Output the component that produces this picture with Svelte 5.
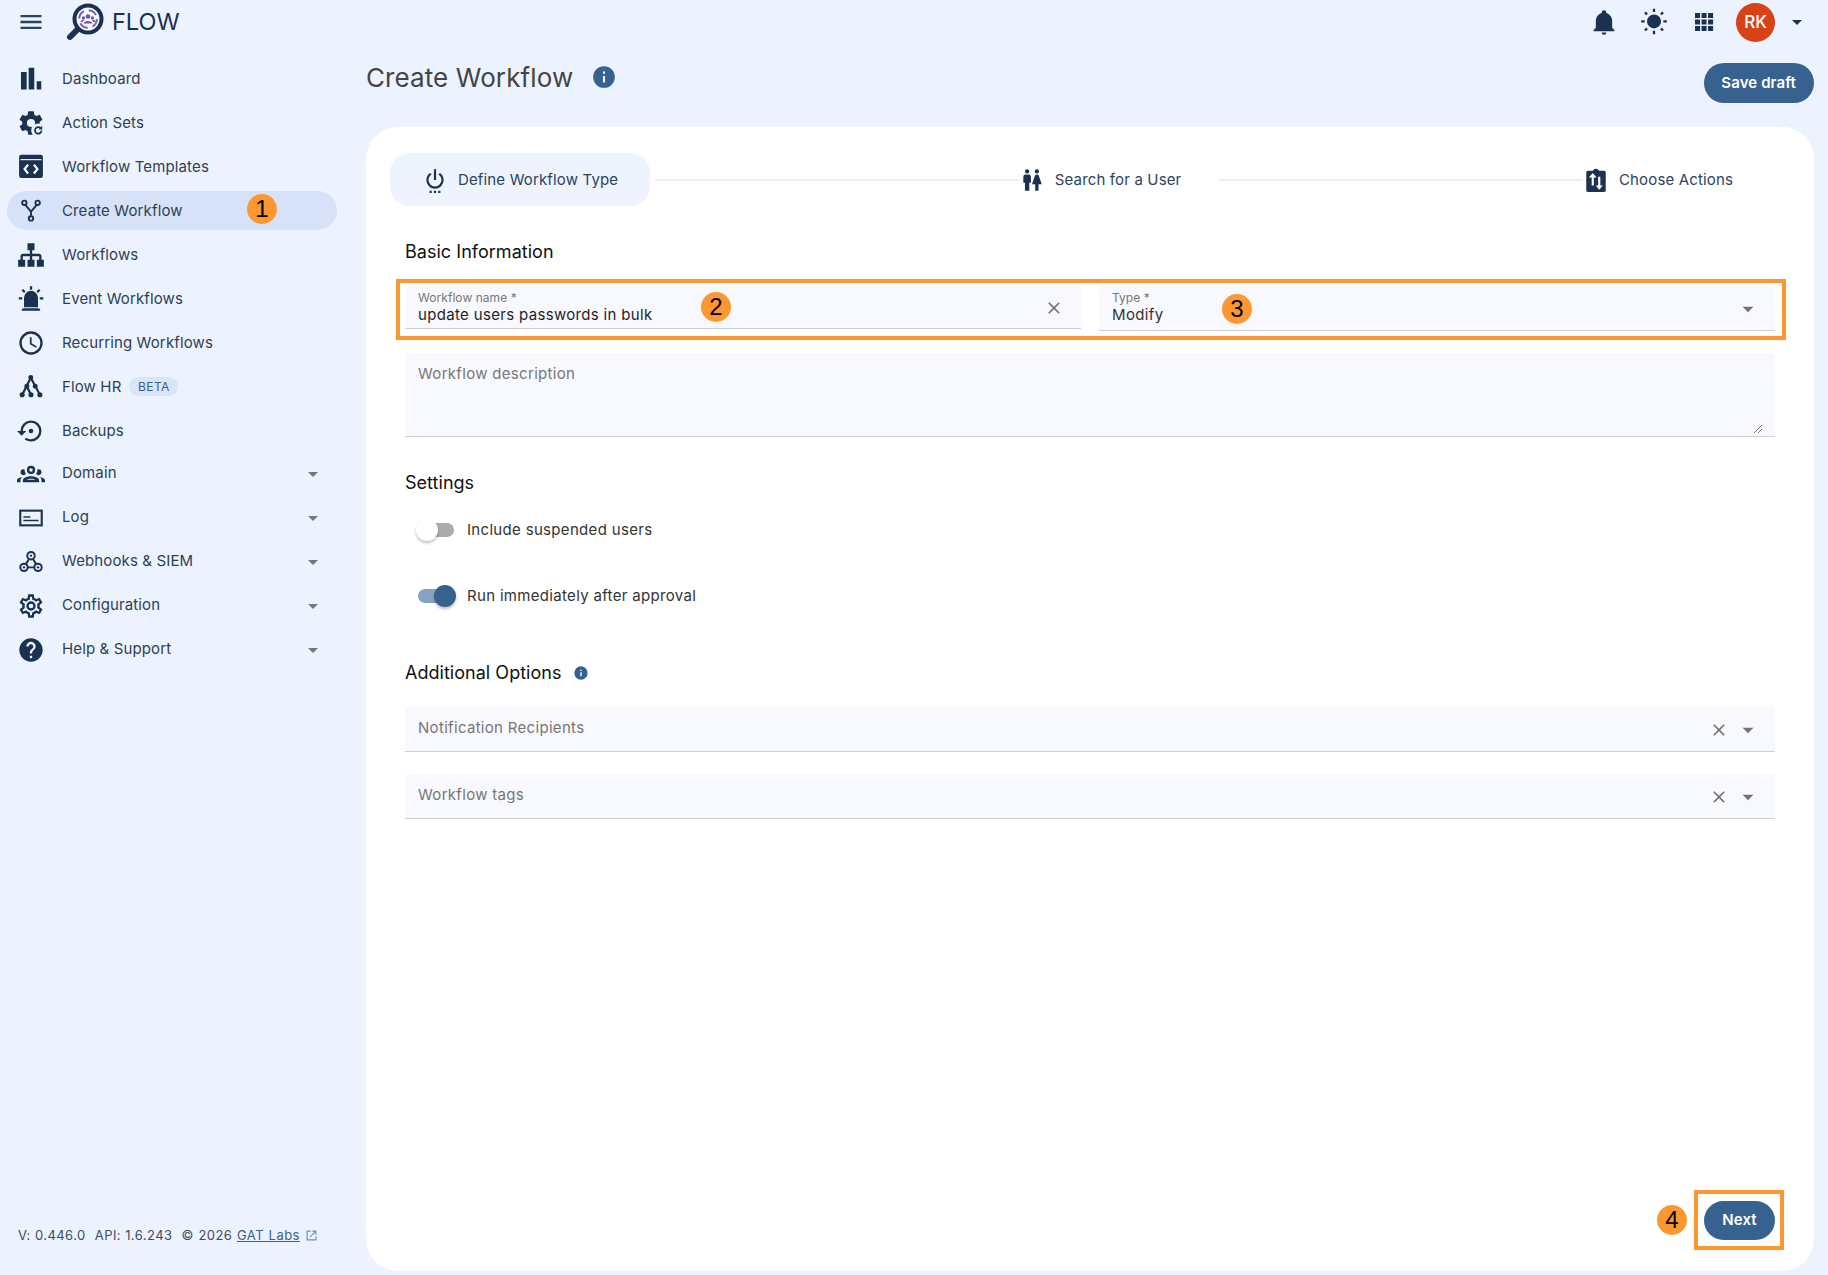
<script>
	const P = (d) => `<path fill="currentColor" d="${d}"/>`;
	const cog =
		"M12,15.5A3.5,3.5 0 0,1 8.5,12A3.5,3.5 0 0,1 12,8.5A3.5,3.5 0 0,1 15.5,12A3.5,3.5 0 0,1 12,15.5M19.43,12.97C19.47,12.65 19.5,12.33 19.5,12C19.5,11.67 19.47,11.34 19.43,11L21.54,9.37C21.73,9.22 21.78,8.95 21.66,8.73L19.66,5.27C19.54,5.05 19.27,4.96 19.05,5.05L16.56,6.05C16.04,5.66 15.5,5.32 14.87,5.07L14.5,2.42C14.46,2.18 14.25,2 14,2H10C9.75,2 9.54,2.18 9.5,2.42L9.13,5.07C8.5,5.32 7.96,5.66 7.44,6.05L4.95,5.05C4.73,4.96 4.46,5.05 4.34,5.27L2.34,8.73C2.21,8.95 2.27,9.22 2.46,9.37L4.57,11C4.53,11.34 4.5,11.67 4.5,12C4.5,12.33 4.53,12.65 4.57,12.97L2.46,14.63C2.27,14.78 2.21,15.05 2.34,15.27L4.34,18.73C4.46,18.95 4.73,19.03 4.95,18.95L7.44,17.94C7.96,18.34 8.5,18.68 9.13,18.93L9.5,21.58C9.54,21.82 9.75,22 10,22H14C14.25,22 14.46,21.82 14.5,21.58L14.87,18.93C15.5,18.67 16.04,18.34 16.56,17.94L19.05,18.95C19.27,19.03 19.54,18.95 19.66,18.73L21.66,15.27C21.78,15.05 21.73,14.78 21.54,14.63L19.43,12.97Z";

	const icons = {
		menu: P("M3,6H21V8H3V6M3,11H21V13H3V11M3,16H21V18H3V16Z"),
		bars: P("M3.4 6h4.9v15H3.4zM10 2.4h4.8V21H10zM16.9 14h3.9v7h-3.9z"),
		actionsets:
			P(cog) +
			`<circle cx="18.2" cy="18.4" r="6" fill="#ecf3fe"/><path d="M21 18.4a2.8 2.8 0 1 1-.9-2.1" fill="none" stroke="currentColor" stroke-width="1.5"/><path fill="currentColor" d="M21.6 14.4v3.2h-3.2z"/>`,
		templates: `<rect x="1.8" y="1.5" width="20.4" height="20" rx="2" fill="currentColor"/><rect x="3" y="5.2" width="18" height="1" fill="#ecf3fe"/><path d="M9.5 10l-3 3.8 3 3.8M14.5 10l3 3.8-3 3.8" fill="none" stroke="#fff" stroke-width="1.9"/>`,
		fork: `<g fill="none" stroke="currentColor" stroke-width="1.6"><circle cx="6.3" cy="5" r="1.9"/><circle cx="17.7" cy="5" r="1.9"/><circle cx="12" cy="18.4" r="1.9"/><path d="M7.1 6.8L12 12.6 16.9 6.8M12 12.6v3.9"/></g>`,
		sitemap: P("M9,2V8H11V11H5C3.89,11 3,11.89 3,13V16H1V22H7V16H5V13H11V16H9V22H15V16H13V13H19V16H17V22H23V16H21V13C21,11.89 20.1,11 19,11H13V8H15V2H9Z"),
		alarm: P("M6,6.9L3.87,4.78L5.28,3.37L7.4,5.5L6,6.9M13,1V4H11V1H13M20.13,4.78L18,6.9L16.6,5.5L18.72,3.37L20.13,4.78M4.5,10.5V12.5H1.5V10.5H4.5M19.5,10.5H22.5V12.5H19.5V10.5M6,20H18A2,2 0 0,1 20,22H4A2,2 0 0,1 6,20M12,5A6,6 0 0,1 18,11V19H6V11A6,6 0 0,1 12,5Z"),
		clock: P("M12,20A8,8 0 0,0 20,12A8,8 0 0,0 12,4A8,8 0 0,0 4,12A8,8 0 0,0 12,20M12,2A10,10 0 0,1 22,12A10,10 0 0,1 12,22C6.47,22 2,17.5 2,12A10,10 0 0,1 12,2M12.5,7V12.25L17,14.92L16.25,16.15L11,13V7H12.5Z"),
		tree: `<g fill="currentColor"><circle cx="11.800" cy="3.800" r="2.100"/><circle cx="8.400" cy="11.400" r="2.100"/><circle cx="15.600" cy="11.400" r="2.100"/><circle cx="4.400" cy="18.600" r="2.200"/><circle cx="12" cy="18.600" r="2.200"/><circle cx="19.600" cy="18.600" r="2.200"/></g><path d="M11.800 4L4.600 18.500M11.800 4l7.700 14.500M8.400 11.400l3.600 7.200" fill="none" stroke="currentColor" stroke-width="1.900"/>`,
		backup: P("M12,3A9,9 0 0,0 3,12H0L4,16L8,12H5A7,7 0 0,1 12,5A7,7 0 0,1 19,12A7,7 0 0,1 12,19C10.5,19 9.09,18.5 7.94,17.7L6.5,19.14C8.04,20.3 9.94,21 12,21A9,9 0 0,0 21,12A9,9 0 0,0 12,3M14,12A2,2 0 0,0 12,10A2,2 0 0,0 10,12A2,2 0 0,0 12,14A2,2 0 0,0 14,12Z"),
		group: P("M12,5A3.5,3.5 0 0,0 8.5,8.5A3.5,3.5 0 0,0 12,12A3.5,3.5 0 0,0 15.5,8.5A3.5,3.5 0 0,0 12,5M12,7A1.5,1.5 0 0,1 13.5,8.5A1.5,1.5 0 0,1 12,10A1.5,1.5 0 0,1 10.5,8.5A1.5,1.5 0 0,1 12,7M5.5,8A2.5,2.5 0 0,0 3,10.5C3,11.44 3.53,12.25 4.29,12.68C4.65,12.88 5.06,13 5.5,13C5.94,13 6.35,12.88 6.71,12.68C7.08,12.47 7.39,12.17 7.62,11.81C6.89,10.86 6.5,9.7 6.5,8.5C6.5,8.41 6.5,8.31 6.5,8.22C6.2,8.08 5.86,8 5.5,8M18.5,8C18.14,8 17.8,8.08 17.5,8.22C17.5,8.31 17.5,8.41 17.5,8.5C17.5,9.7 17.11,10.86 16.38,11.81C16.5,12 16.63,12.15 16.78,12.3C16.94,12.45 17.1,12.58 17.29,12.68C17.65,12.88 18.06,13 18.5,13C18.94,13 19.35,12.88 19.71,12.68C20.47,12.25 21,11.44 21,10.5A2.5,2.5 0 0,0 18.5,8M12,14C9.66,14 5,15.17 5,17.5V19H19V17.5C19,15.17 14.34,14 12,14M4.71,14.55C2.78,14.78 0,15.76 0,17.5V19H3V17.07C3,16.06 3.69,15.22 4.71,14.55M19.29,14.55C20.31,15.22 21,16.06 21,17.07V19H24V17.5C24,15.76 21.22,14.78 19.29,14.55M12,16C13.53,16 15.24,16.5 16.23,17H7.77C8.76,16.5 10.47,16 12,16Z"),
		log: `<rect x="2.800" y="5.700" width="18.400" height="12.600" fill="none" stroke="currentColor" stroke-width="1.800"/><path d="M5.500 10.400h6v1.300h-6zM5.500 13.400h13v1.300h-13z" fill="currentColor"/>`,
		webhook: `<g fill="none" stroke="currentColor" stroke-width="1.700"><circle cx="12" cy="6.600" r="3.200"/><circle cx="6" cy="16.600" r="3.200"/><circle cx="18" cy="16.600" r="3.200"/><path d="M10.300 9.500L7.600 13.800M13.700 9.500l2.700 4.300M9.200 16.600h5.600"/></g><g fill="currentColor"><circle cx="12" cy="6.600" r="1"/><circle cx="6" cy="16.600" r="1"/><circle cx="18" cy="16.600" r="1"/></g>`,
		gear: P("M12,8A4,4 0 0,1 16,12A4,4 0 0,1 12,16A4,4 0 0,1 8,12A4,4 0 0,1 12,8M12,10A2,2 0 0,0 10,12A2,2 0 0,0 12,14A2,2 0 0,0 14,12A2,2 0 0,0 12,10M10,22C9.75,22 9.54,21.82 9.5,21.58L9.13,18.93C8.5,18.68 7.96,18.34 7.44,17.94L4.95,18.95C4.73,19.03 4.46,18.95 4.34,18.73L2.34,15.27C2.21,15.05 2.27,14.78 2.46,14.63L4.57,12.97L4.5,12L4.57,11L2.46,9.37C2.27,9.22 2.21,8.95 2.34,8.73L4.34,5.27C4.46,5.05 4.73,4.96 4.95,5.05L7.44,6.05C7.96,5.66 8.5,5.32 9.13,5.07L9.5,2.42C9.54,2.18 9.75,2 10,2H14C14.25,2 14.46,2.18 14.5,2.42L14.87,5.07C15.5,5.32 16.04,5.66 16.56,6.05L19.05,5.05C19.27,4.96 19.54,5.05 19.66,5.27L21.66,8.73C21.79,8.95 21.73,9.22 21.54,9.37L19.43,11L19.5,12L19.43,13L21.54,14.63C21.73,14.78 21.79,15.05 21.66,15.27L19.66,18.73C19.54,18.95 19.27,19.04 19.05,18.95L16.56,17.95C16.04,18.34 15.5,18.68 14.87,18.93L14.5,21.58C14.46,21.82 14.25,22 14,22H10M11.25,4L10.88,6.61C9.68,6.86 8.62,7.5 7.85,8.39L5.44,7.35L4.69,8.65L6.8,10.2C6.4,11.37 6.4,12.64 6.8,13.8L4.68,15.36L5.43,16.66L7.86,15.62C8.63,16.5 9.68,17.14 10.87,17.38L11.24,20H12.76L13.13,17.39C14.32,17.14 15.37,16.5 16.14,15.62L18.57,16.66L19.32,15.36L17.2,13.81C17.6,12.64 17.6,11.37 17.2,10.2L19.31,8.65L18.56,7.35L16.15,8.39C15.38,7.5 14.32,6.86 13.12,6.62L12.75,4H11.25Z"),
		help: P("M15.07,11.25L14.17,12.17C13.45,12.89 13,13.5 13,15H11V14.5C11,13.39 11.45,12.39 12.17,11.67L13.41,10.41C13.78,10.05 14,9.55 14,9C14,7.89 13.1,7 12,7A2,2 0 0,0 10,9H8A4,4 0 0,1 12,5A4,4 0 0,1 16,9C16,9.88 15.64,10.67 15.07,11.25M13,19H11V17H13M12,2A10,10 0 0,0 2,12A10,10 0 0,0 12,22A10,10 0 0,0 22,12C22,6.47 17.5,2 12,2Z"),
		bell: P("M21,19V20H3V19L5,17V11C5,7.9 7.03,5.17 10,4.29C10,4.19 10,4.1 10,4A2,2 0 0,1 12,2A2,2 0 0,1 14,4C14,4.1 14,4.19 14,4.29C16.97,5.17 19,7.9 19,11V17L21,19M14,21A2,2 0 0,1 12,23A2,2 0 0,1 10,21"),
		sun: P("M3.55,18.54L4.96,19.95L6.76,18.16L5.34,16.74M11,22.45C11.32,22.45 13,22.45 13,22.45V19.5H11M12,5.5A6,6 0 0,0 6,11.5A6,6 0 0,0 12,17.5A6,6 0 0,0 18,11.5C18,8.18 15.31,5.5 12,5.5M20,12.5H23V10.5H20M17.24,18.16L19.04,19.95L20.45,18.54L18.66,16.74M20.45,4.46L19.04,3.05L17.24,4.84L18.66,6.26M13,0.55H11V3.5H13M4,10.5H1V12.5H4M6.76,4.84L4.96,3.05L3.55,4.46L5.34,6.26L6.76,4.84Z"),
		apps: P("M4.3 4.3h4.3v4.3H4.3zM9.9 4.3h4.3v4.3H9.9zM15.5 4.3h4.3v4.3h-4.3zM4.3 9.9h4.3v4.3H4.3zM9.9 9.9h4.3v4.3H9.9zM15.5 9.9h4.3v4.3h-4.3zM4.3 15.5h4.3v4.3H4.3zM9.9 15.5h4.3v4.3H9.9zM15.5 15.5h4.3v4.3h-4.3z"),
		power: P("M15,24H17V22H15M16.56,5.44L15.11,6.89C16.84,7.94 18,9.83 18,12A6,6 0 0,1 12,18A6,6 0 0,1 6,12C6,9.83 7.16,7.94 8.88,6.88L7.44,5.44C5.36,6.88 4,9.28 4,12A8,8 0 0,0 12,20A8,8 0 0,0 20,12C20,9.28 18.64,6.88 16.56,5.44M13,2H11V12H13M11,24H13V22H11M7,24H9V22H7V24Z"),
		people: P("M7.5,2A2,2 0 0,1 9.5,4A2,2 0 0,1 7.5,6A2,2 0 0,1 5.5,4A2,2 0 0,1 7.5,2M6,7H9A2,2 0 0,1 11,9V14.5H9.5V22H5.5V14.5H4V9A2,2 0 0,1 6,7M16.5,2A2,2 0 0,1 18.5,4A2,2 0 0,1 16.5,6A2,2 0 0,1 14.5,4A2,2 0 0,1 16.5,2M15,22V16H12L14.59,8.41C14.84,7.59 15.6,7 16.5,7C17.4,7 18.16,7.59 18.41,8.41L21,16H18V22H15Z"),
		clipswap: `<path fill="currentColor" d="M4.5 3.5h4.7a3 3 0 0 1 5.6 0h4.7A1.5 1.5 0 0 1 21 5v16.5a1.5 1.5 0 0 1-1.5 1.5h-15A1.5 1.5 0 0 1 3 21.500V5a1.500 1.500 0 0 1 1.500-1.500z"/><path fill="#fff" d="M9 5.600L5.400 9.600H8V17h2V9.600h2.600zM14 9v8h-2.200l3.200 4 3.200-4H16V9z"/>`,
		info: P("M13,9H11V7H13M13,17H11V11H13M12,2A10,10 0 0,0 2,12A10,10 0 0,0 12,22A10,10 0 0,0 22,12A10,10 0 0,0 12,2Z"),
		close: P("M19,6.41L17.59,5L12,10.59L6.41,5L5,6.41L10.59,12L5,17.59L6.41,19L12,13.41L17.59,19L19,17.59L13.41,12L19,6.41Z"),
		down: P("M7,10L12,15L17,10H7Z"),
		open: `<path d="M5 5h6v1.600H6.600v10.800h10.800V13H19v6H5z" fill="currentColor"/><path d="M13 5h6v6h-1.600V7.700l-6.800 6.800-1.100-1.100 6.800-6.800H13z" fill="currentColor"/>`
	};

	const topItems = [
		{ icon: "bars", label: "Dashboard" },
		{ icon: "actionsets", label: "Action Sets" },
		{ icon: "templates", label: "Workflow Templates" },
		{ icon: "fork", label: "Create Workflow", active: true, badge: 1 },
		{ icon: "sitemap", label: "Workflows" },
		{ icon: "alarm", label: "Event Workflows" },
		{ icon: "clock", label: "Recurring Workflows" },
		{ icon: "tree", label: "Flow HR", chip: "BETA" },
		{ icon: "backup", label: "Backups" }
	];
	const groupItems = [
		{ icon: "group", label: "Domain" },
		{ icon: "log", label: "Log" },
		{ icon: "webhook", label: "Webhooks & SIEM" },
		{ icon: "gear", label: "Configuration" },
		{ icon: "help", label: "Help & Support" }
	];
</script>

{#snippet icon(name, size = 28)}
	<svg class="ic" viewBox="0 0 24 24" width={size} height={size} aria-hidden="true">{@html icons[name]}</svg>
{/snippet}

{#snippet navItem(item, expandable)}
	<a class="nav-item" class:active={item.active} href=".">
		<span class="nav-icon">{@render icon(item.icon)}</span>
		<span class="nav-label">{item.label}</span>
		{#if item.chip}<span class="chip">{item.chip}</span>{/if}
		{#if item.badge}<span class="badge nav-badge">{item.badge}</span>{/if}
		{#if expandable}<span class="nav-caret">{@render icon("down", 24)}</span>{/if}
	</a>
{/snippet}

<div class="shell">
	<header class="topbar">
		<button class="menu-btn" aria-label="Menu">{@render icon("menu")}</button>
		<div class="logo">
			<svg viewBox="0 0 40 40" width="40" height="40" aria-hidden="true">
				<path d="M13 27L5 35" stroke="#1a3150" stroke-width="6" stroke-linecap="round" />
				<circle cx="23" cy="17" r="13.500" fill="#f7f8fd" stroke="#1a3150" stroke-width="4" />
				<circle cx="23" cy="17" r="8.800" fill="none" stroke="#7a62b8" stroke-width="2" stroke-dasharray="9 5" />
				<g fill="#6b55a8">
					<circle cx="23" cy="14.500" r="2.300" />
					<circle cx="18.500" cy="16" r="1.700" />
					<circle cx="27.500" cy="16" r="1.700" />
					<path d="M18.500 21.500c.5-3.500 8.500-3.500 9 0zM15.500 20c.2-2 2.500-2.300 3.500-1.800l-1.500 1.800zM30.500 20c-.2-2-2.500-2.300-3.500-1.800l1.500 1.800z" />
				</g>
			</svg>
			<span class="logo-text">FLOW</span>
		</div>
		<div class="top-actions">
			{@render icon("bell")}
			{@render icon("sun")}
			{@render icon("apps")}
			<span class="avatar">RK</span>
			<span class="top-caret">{@render icon("down", 24)}</span>
		</div>
	</header>

	<aside class="sidebar">
		<nav class="nav">
			{#each topItems as item}
				{@render navItem(item, false)}
			{/each}
		</nav>
		<nav class="nav nav-groups">
			{#each groupItems as item}
				{@render navItem(item, true)}
			{/each}
		</nav>
		<div class="version">
			<span>V: 0.446.0</span>
			<span>API: 1.6.243</span>
			<span class="copyright">© 2026 <a href=".">GAT Labs</a></span>
			<span class="ext">{@render icon("open", 17)}</span>
		</div>
	</aside>

	<main class="main">
		<div class="page-head">
			<h1>Create Workflow</h1>
			<span class="head-info">{@render icon("info", 26)}</span>
			<button class="btn save">Save draft</button>
		</div>

		<section class="card">
			<div class="stepper">
				<div class="step current">{@render icon("power", 26)}<span>Define Workflow Type</span></div>
				<div class="step-line"></div>
				<div class="step">{@render icon("people", 26)}<span>Search for a User</span></div>
				<div class="step-line"></div>
				<div class="step">{@render icon("clipswap", 26)}<span>Choose Actions</span></div>
			</div>

			<div class="form">
				<h2 class="first">Basic Information</h2>
				<div class="marked-row">
					<div class="field named">
						<div class="field-text">
							<label for="wf-name">Workflow name *</label>
							<input id="wf-name" value="update users passwords in bulk" />
						</div>
						<span class="badge b2">2</span>
						<span class="field-icon close-ic">{@render icon("close", 20)}</span>
					</div>
					<div class="field typed">
						<div class="field-text">
							<span class="small-label">Type *</span>
							<span class="type-value">Modify</span>
						</div>
						<span class="badge b3">3</span>
						<span class="field-icon">{@render icon("down", 26)}</span>
					</div>
				</div>

				<div class="description">
					<span class="placeholder">Workflow description</span>
					<svg class="resizer" viewBox="0 0 10 10" width="10" height="10" aria-hidden="true">
						<path d="M9 1L1 9M9 5L5 9" stroke="#777" stroke-width="1" />
					</svg>
				</div>

				<h2 class="settings">Settings</h2>
				<div class="toggle-row first-toggle">
					<span class="switch off"><span class="thumb"></span></span>
					<span class="toggle-label">Include suspended users</span>
				</div>
				<div class="toggle-row second-toggle">
					<span class="switch on"><span class="thumb"></span></span>
					<span class="toggle-label">Run immediately after approval</span>
				</div>

				<h2 class="additional">
					Additional Options
					<span class="mini-info">{@render icon("info", 16)}</span>
				</h2>
				<div class="select-field first-select">
					<span class="placeholder">Notification Recipients</span>
					<span class="field-icon close-ic">{@render icon("close", 20)}</span>
					<span class="field-icon">{@render icon("down", 26)}</span>
				</div>
				<div class="select-field">
					<span class="placeholder">Workflow tags</span>
					<span class="field-icon close-ic">{@render icon("close", 20)}</span>
					<span class="field-icon">{@render icon("down", 26)}</span>
				</div>
			</div>

			<div class="card-foot">
				<span class="badge">4</span>
				<div class="next-box"><button class="btn">Next</button></div>
			</div>
		</section>
	</main>
</div>

<style>
	:global(body) {
		margin: 0;
		background: #ecf3fe;
		font-family: Inter, "Liberation Sans", sans-serif;
		color: #2e3f55;
	}

	.shell {
		display: grid;
		grid-template-columns: 366px 1fr;
		grid-template-rows: 44px 1fr;
		height: 1275px;
		overflow: hidden;
	}

	.ic {
		display: block;
		flex: none;
	}

	/* top bar */
	.topbar {
		grid-column: 1 / 3;
		display: flex;
		align-items: center;
		padding-right: 19px;
		color: #1a3150;
	}

	.menu-btn {
		border: 0;
		background: none;
		padding: 0;
		margin-left: 17px;
		color: #2b4460;
	}

	.logo {
		display: flex;
		align-items: center;
		margin-left: 20px;
		margin-top: -1px;
	}

	.logo-text {
		margin-left: 7px;
		font-size: 23.500px;
		color: #1a3150;
	}

	.top-actions {
		margin-left: auto;
		display: flex;
		align-items: center;
		gap: 22px;
	}

	.avatar {
		width: 39px;
		height: 39px;
		margin-left: -4px;
		border-radius: 50%;
		background: #d84315;
		color: #fff;
		font-size: 17px;
		font-weight: 500;
		display: flex;
		align-items: center;
		justify-content: center;
	}

	.top-caret {
		margin-left: -12px;
	}

	/* sidebar */
	.sidebar {
		display: flex;
		flex-direction: column;
		padding: 15px 29px 0 7px;
		min-height: 0;
	}

	.nav {
		display: flex;
		flex-direction: column;
		gap: 5px;
	}

	.nav-groups {
		margin-top: 2.500px;
	}

	.nav-item {
		position: relative;
		display: flex;
		align-items: center;
		height: 39px;
		border-radius: 20px;
		padding-left: 10px;
		text-decoration: none;
		color: #2e3f55;
	}

	.nav-item.active {
		background: #d7e2f8;
	}

	.nav-icon {
		color: #1a3150;
		margin-right: 17px;
	}

	.nav-groups .nav-icon {
		margin-top: 3px;
	}

	.nav-label {
		font-size: 15px;
		letter-spacing: 0.13px;
	}

	.chip {
		margin-left: 8px;
		height: 19px;
		width: 49px;
		border-radius: 10px;
		background: #dbe5f8;
		color: #37628f;
		font-size: 12px;
		letter-spacing: 0.4px;
		display: flex;
		align-items: center;
		justify-content: center;
	}

	.nav-caret {
		margin-left: auto;
		margin-right: 12px;
		margin-top: 3px;
		color: #777;
	}

	.badge {
		width: 30px;
		height: 30px;
		border-radius: 50%;
		background: #fd9731;
		color: #000;
		font-family: "Liberation Sans", sans-serif;
		font-size: 24px;
		display: flex;
		align-items: center;
		justify-content: center;
		flex: none;
	}

	.nav-badge {
		position: absolute;
		left: 240px;
		top: 3px;
	}

	.version {
		margin-top: auto;
		margin-bottom: 31px;
		margin-left: 11px;
		display: flex;
		align-items: center;
		gap: 9px;
		font-size: 13px;
		letter-spacing: 0.45px;
		color: #3d4d60;
		white-space: nowrap;
	}

	.version a {
		color: #37628f;
	}

	.copyright {
		word-spacing: 0.5px;
	}

	.ext {
		margin-left: -6px;
		margin-top: 1px;
		color: #6f8fb4;
	}

	/* main column */
	.main {
		display: flex;
		flex-direction: column;
		padding: 0 14px 4px 0;
		min-height: 0;
	}

	.page-head {
		position: relative;
		height: 83px;
		display: flex;
		align-items: flex-start;
	}

	h1 {
		margin: 18px 0 0;
		font-size: 26px;
		line-height: 32px;
		font-weight: 400;
		letter-spacing: 0.1px;
		color: #444;
	}

	.head-info {
		margin: 20px 0 0 18px;
		color: #37628f;
	}

	.btn {
		border: 0;
		background: #37628f;
		color: #fff;
		border-radius: 20px;
		height: 39px;
		font-family: inherit;
		font-size: 15px;
		font-weight: 600;
		letter-spacing: 0.1px;
		padding: 0 17px 1px;
	}

	.save {
		margin: 19px 0 0 auto;
		height: 40px;
		padding: 0 18px 1px 17px;
	}

	.card {
		flex: 1;
		min-height: 0;
		background: #fff;
		border-radius: 32px;
		display: flex;
		flex-direction: column;
	}

	/* stepper */
	.stepper {
		display: flex;
		align-items: center;
		margin: 26px 43px 0 24px;
		height: 53px;
		font-size: 15px;
		letter-spacing: 0.15px;
		color: #1f3a5a;
	}

	.step {
		display: flex;
		align-items: center;
		gap: 10px;
		padding-right: 38px;
		color: #1a3150;
		white-space: nowrap;
	}

	.step span {
		color: #2a4462;
	}

	.step.current {
		height: 53px;
		padding: 0 32px;
		margin-right: 5px;
		background: #eef3fd;
		border-radius: 20px;
	}

	.step-line {
		flex: 1;
		height: 2px;
		background: #eeeeee;
	}

	/* form */
	.form {
		padding: 0 39px;
	}

	h2 {
		margin: 0;
		font-size: 18px;
		line-height: 24px;
		font-weight: 400;
		letter-spacing: 0.03px;
		color: #111;
	}

	h2.first {
		margin: 34px 0 15px;
	}

	.marked-row {
		margin: 0 -11px 0 -9px;
		height: 61px;
		box-sizing: border-box;
		border: 4px solid #fd9731;
		padding: 3px 7px 0 5px;
		display: grid;
		grid-template-columns: 1fr 1fr;
		column-gap: 18px;
	}

	.field {
		position: relative;
		display: flex;
		align-items: center;
		justify-content: space-between;
		box-sizing: border-box;
		background: #f8f9fe;
		border-bottom: 1.500px solid #cfcfd3;
		border-radius: 4px 4px 0 0;
		padding: 0 14px 0 13px;
		color: #666;
	}

	.field.named {
		height: 43px;
		padding-right: 17px;
	}

	.field.typed {
		height: 45px;
	}

	.field-text {
		display: flex;
		flex-direction: column;
		flex: 1;
		min-width: 0;
	}

	.named .field-text {
		padding-top: 1px;
	}

	.typed .field-text {
		margin-top: -2px;
	}

	.field label,
	.small-label {
		font-size: 12px;
		line-height: 14px;
		color: #777;
		letter-spacing: 0.05px;
	}

	.field input {
		border: 0;
		padding: 0;
		background: none;
		outline: none;
		font-family: inherit;
		font-size: 15px;
		line-height: 19px;
		letter-spacing: 0.33px;
		color: #1e1e1e;
		width: 100%;
	}

	.type-value {
		font-size: 15px;
		line-height: 19px;
		letter-spacing: 0.37px;
		color: #333;
	}

	.b2 {
		position: absolute;
		left: 296px;
		top: 6px;
	}

	.b3 {
		position: absolute;
		left: 123px;
		top: 8px;
	}

	.description {
		position: relative;
		margin-top: 13px;
		height: 84px;
		box-sizing: border-box;
		background: #f8f9fe;
		border-bottom: 1.500px solid #cfcfd3;
		border-radius: 4px 4px 0 0;
		padding: 10px 13px;
	}

	.placeholder {
		font-size: 15px;
		line-height: 20px;
		letter-spacing: 0.31px;
		color: #767676;
	}

	.resizer {
		position: absolute;
		right: 12px;
		bottom: 2px;
	}

	h2.settings {
		margin: 34px 0 19px;
	}

	.toggle-row {
		display: flex;
		align-items: center;
		height: 32px;
		padding-left: 11px;
	}

	.second-toggle {
		margin-top: 34px;
	}

	.switch {
		position: relative;
		box-sizing: border-box;
		width: 38px;
		height: 14px;
		margin: 0 13px 0 2px;
		flex: none;
		border-radius: 7px;
	}

	.switch.off {
		background: #ababab;
		width: 36px;
		margin-right: 13px;
	}

	.switch.on {
		background: #87a3c3;
		width: 34px;
		margin-right: 15px;
	}

	.thumb {
		position: absolute;
		top: -4px;
		width: 22px;
		height: 22px;
		border-radius: 50%;
		box-shadow: 0 2px 3px rgba(0, 0, 0, 0.25);
	}

	.off .thumb {
		left: -2px;
		background: #fff;
	}

	.on .thumb {
		right: -4px;
		background: #37628f;
	}

	.toggle-label {
		margin-top: -2px;
		font-size: 15px;
		letter-spacing: 0.32px;
		color: #333;
	}

	h2.additional {
		margin: 49px 0 22px;
		display: flex;
		align-items: center;
	}

	.mini-info {
		margin-left: 11px;
		color: #37628f;
	}

	.select-field {
		display: flex;
		align-items: center;
		height: 45px;
		box-sizing: border-box;
		background: #f8f9fe;
		border-bottom: 1.500px solid #cfcfd3;
		border-radius: 4px 4px 0 0;
		padding: 0 14px 0 13px;
		margin-top: 22px;
		color: #666;
	}

	.first-select {
		margin-top: 0;
	}

	.select-field .placeholder {
		margin-right: auto;
		margin-top: -3px;
	}

	.field-icon {
		color: #757575;
	}

	.select-field .close-ic {
		margin-right: 6px;
		margin-top: 1px;
	}

	.named .close-ic {
		margin-top: 2px;
	}

	.select-field .close-ic + .field-icon,
	.typed .field-icon {
		margin-top: 1px;
	}

	/* bottom actions */
	.card-foot {
		margin-top: auto;
		display: flex;
		align-items: center;
		justify-content: flex-end;
		padding: 0 30px 21px 0;
	}

	.card-foot .badge {
		margin-right: 7px;
	}

	.next-box {
		box-sizing: border-box;
		width: 90px;
		height: 60px;
		border: 4px solid #fd9731;
		padding-left: 1px;
		display: flex;
		align-items: center;
		justify-content: center;
	}

	.next-box .btn {
		padding: 0 18px 2px;
	}
</style>
